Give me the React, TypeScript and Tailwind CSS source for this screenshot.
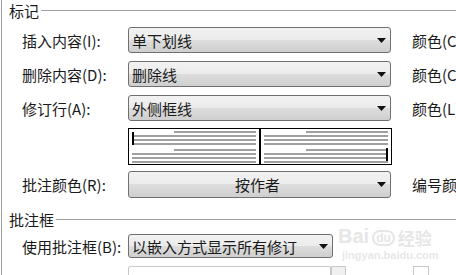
const FONT = "font-['Noto_Sans_CJK_SC','Noto_Sans',sans-serif]";

function Arrow() {
  return (
    <svg width="9" height="5" viewBox="0 0 9 5" className="shrink-0">
      <path d="M0 0 H9 L4.5 5 Z" fill="#111" />
    </svg>
  );
}

function Dropdown({ text, w = 'w-[263px]', h = 'h-[26px]', center = false }: { text: string; w?: string; h?: string; center?: boolean }) {
  return (
    <div
      className={`${w} ${h} shrink-0 flex items-center rounded-[3px] border border-[#707070] bg-[linear-gradient(#f2f2f2_0%,#ebebeb_50%,#dddddd_50%,#cfcfcf_100%)] pl-[3px] pr-[4px]`}
    >
      <span className={`flex-1 text-[15px] leading-none text-[#1a1a1a] whitespace-nowrap ${center ? 'text-center pl-[6px]' : ''}`}>{text}</span>
      <Arrow />
    </div>
  );
}

function Row({ label, children, right, mt }: { label: string; children: React.ReactNode; right?: string; mt: string }) {
  return (
    <div className={`flex items-center ${mt}`}>
      <span className="w-[106px] shrink-0 pl-[20px] box-content text-[15px] leading-none text-[#1a1a1a] whitespace-nowrap">{label}</span>
      {children}
      {right && <span className="ml-[21px] text-[15px] leading-none text-[#1a1a1a] whitespace-nowrap">{right}</span>}
    </div>
  );
}

function Heading({ text, mt }: { text: string; mt: string }) {
  return (
    <div className={`flex items-center ${mt} h-[20px]`}>
      <span className="pl-[7px] text-[15px] leading-none text-[#1a1a1a] whitespace-nowrap">{text}</span>
      <div className="flex-1 h-px bg-[#a0a0a0] ml-[2px]" />
    </div>
  );
}

function Lines({ side }: { side: 'left' | 'right' }) {
  const rows = [true, false, false, false, true, false, false, false];
  return (
    <div className="relative flex-1 flex flex-col gap-[2px] pt-[2px] px-[3px]">
      {rows.map((short, i) => (
        <div key={i} className={`h-[2px] shrink-0 bg-[#a0a0a0] ${short ? 'ml-[42px]' : ''} ${i === 4 ? 'mt-[2px]' : ''}`} />
      ))}
      {side === 'left' ? (
        <div className="absolute left-[3px] top-[3px] w-[2px] h-[13px] bg-black" />
      ) : (
        <div className="absolute right-[3px] top-[19px] w-[2px] h-[13px] bg-black" />
      )}
    </div>
  );
}

export default function App() {
  return (
    <div className={`w-[456px] h-[275px] overflow-hidden bg-white ${FONT} relative`}>
      <div className="ml-[1px] h-full border-l border-[#a0a0a0]">
        <Heading text="标记" mt="mt-0" />
        <Row label="插入内容(I):" right="颜色(C):" mt="mt-[7px]">
          <Dropdown text="单下划线" />
        </Row>
        <Row label="删除内容(D):" right="颜色(C):" mt="mt-[8px]">
          <Dropdown text="删除线" />
        </Row>
        <Row label="修订行(A):" right="颜色(L):" mt="mt-[8px]">
          <Dropdown text="外侧框线" />
        </Row>
        <div className="flex mt-[7px]">
          <div className="w-[106px] pl-[20px] box-content shrink-0" />
          <div className="w-[264px] h-[37px] border border-black flex overflow-hidden">
            <Lines side="left" />
            <div className="w-[2px] bg-black" />
            <Lines side="right" />
          </div>
        </div>
        <Row label="批注颜色(R):" right="编号颜色:" mt="mt-[6px]">
          <Dropdown text="按作者" h="h-[27px]" center />
        </Row>
        <Heading text="批注框" mt="mt-[11px]" />
        <Row label="使用批注框(B):" mt="mt-[5px]">
          <Dropdown text="以嵌入方式显示所有修订" w="w-[205px]" h="h-[24px]" />
        </Row>
        <div className="flex mt-[8px]">
          <div className="w-[106px] pl-[20px] box-content shrink-0" />
          <div className="w-[203px] h-[20px] border border-[#c8c8c8] rounded-[2px]" />
          <div className="w-[15px] h-[20px] border border-[#c8c8c8] bg-[#f0f0f0]" />
          <div className="ml-[67px] w-[16px] h-[20px] border border-[#c8c8c8]" />
        </div>
      </div>
      <div className="absolute left-[338px] top-[226px] flex items-end gap-[3px] text-[#e6e6e6] font-['Liberation_Sans',sans-serif] font-bold">
        <span className="text-[20px] leading-none">Bai</span>
        <span className="text-[12px] leading-none rounded-full border-2 border-[#e6e6e6] px-[2px]">du</span>
        <span className={`text-[17px] leading-none ${FONT}`}>经验</span>
      </div>
      <div className="absolute left-[342px] top-[250px] text-[11px] leading-none text-[#e8e8e8] font-['Liberation_Sans',sans-serif] font-bold">
        jingyan.baidu.com
      </div>
    </div>
  );
}
